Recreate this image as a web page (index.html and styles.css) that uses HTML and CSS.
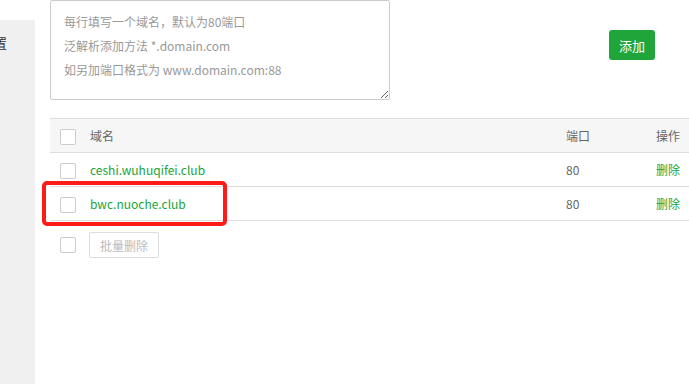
FILE: index.html
```html
<!DOCTYPE html>
<html lang="zh-CN">
  <head>
    <meta charset="UTF-8" />
    <meta name="viewport" content="width=device-width, initial-scale=1.0" />
    <title>域名管理</title>
    <link rel="stylesheet" href="styles.css">
  </head>
  <body>
    <!-- Side menu (cut off) -->
    <div class="side">
      <div class="side-item">设置</div>
    </div>

    <div class="main">
      <!-- Input and Actions -->
      <div class="add-row">
        <textarea class="domains" placeholder="每行填写一个域名，默认为80端口&#10;泛解析添加方法 *.domain.com&#10;如另加端口格式为 www.domain.com:88"></textarea>
        <button class="btn-add">添加</button>
      </div>

      <!-- Domain list -->
      <div class="table-wrap">
        <table class="list">
          <colgroup>
            <col class="c-check" />
            <col class="c-name" />
            <col class="c-port" />
            <col class="c-op" />
          </colgroup>
          <thead>
            <tr>
              <th><span class="check"></span></th>
              <th>域名</th>
              <th>端口</th>
              <th>操作</th>
            </tr>
          </thead>
          <tbody>
            <tr>
              <td><span class="check"></span></td>
              <td><a class="link">ceshi.wuhuqifei.club</a></td>
              <td>80</td>
              <td><a class="link">删除</a></td>
            </tr>
            <tr>
              <td><span class="check"></span></td>
              <td><a class="link">bwc.nuoche.club</a></td>
              <td>80</td>
              <td><a class="link">删除</a></td>
            </tr>
          </tbody>
        </table>
        <div class="mark"></div>
      </div>

      <div class="batch">
        <span class="check"></span>
        <button class="btn-batch" disabled>批量删除</button>
      </div>
    </div>
  </body>
</html>
```

FILE: styles.css
```css
html,
body {
  height: 100%;
}
body {
  margin: 0;
  display: flex;
  overflow: hidden;
  font-family: "Microsoft YaHei", "Noto Sans CJK SC", sans-serif;
  font-size: 12px;
  color: #666;
  background: #fff;
}
.side {
  width: 35px;
  flex: none;
  margin-top: 20px;
  background: #f0f0f0;
  overflow: hidden;
}
.side-item {
  margin-top: 13px;
  margin-left: -19px;
  font-size: 13px;
  color: #333;
  white-space: nowrap;
}
.main {
  flex: 1;
  padding-left: 15px;
  min-width: 0;
}
.add-row {
  display: flex;
  align-items: flex-start;
}
.domains {
  box-sizing: border-box;
  width: 340px;
  height: 100px;
  margin: 0;
  padding: 9px 13px;
  border: 1px solid #ccc;
  border-radius: 2px;
  font-family: inherit;
  font-size: 12px;
  line-height: 24px;
  color: #555;
  resize: both;
  outline: none;
}
.domains::placeholder {
  color: #999;
}
.btn-add {
  margin: 30px 0 0 219px;
  width: 46px;
  height: 30px;
  padding: 0;
  border: none;
  border-radius: 3px;
  background-color: #20a53a;
  color: white;
  font-family: inherit;
  font-size: 13px;
  cursor: pointer;
}
.table-wrap {
  position: relative;
  margin-top: 18px;
  width: 680px;
}
.list {
  width: 680px;
  table-layout: fixed;
  border-collapse: collapse;
  border-top: 1px solid #ddd;
}
.c-check {
  width: 30px;
}
.c-name {
  width: 476px;
}
.c-port {
  width: 90px;
}
.list th,
.list td {
  height: 33px;
  padding: 0 0 0 10px;
  border-bottom: 1px solid #ddd;
  text-align: left;
  font-weight: normal;
  font-size: 12px;
}
.list th {
  background-color: #f6f6f6;
}
.link {
  color: #20a53a;
  font-size: 12px;
  text-decoration: none;
  cursor: pointer;
}
.check {
  display: inline-block;
  box-sizing: border-box;
  width: 16px;
  height: 16px;
  border: 1px solid #ccc;
  border-radius: 2px;
  background: #fff;
  vertical-align: middle;
}
.mark {
  position: absolute;
  left: -8px;
  top: 63px;
  width: 185px;
  height: 45px;
  box-sizing: border-box;
  border: 4px solid #fe1a16;
  border-radius: 5px;
}
.batch {
  display: flex;
  align-items: center;
  gap: 13px;
  margin-top: 11px;
  padding-left: 10px;
}
.btn-batch {
  height: 26px;
  padding: 0 10px;
  border: 1px solid #ddd;
  border-radius: 2px;
  background: #fff;
  color: #bbb;
  font-family: inherit;
  font-size: 12px;
}
```
